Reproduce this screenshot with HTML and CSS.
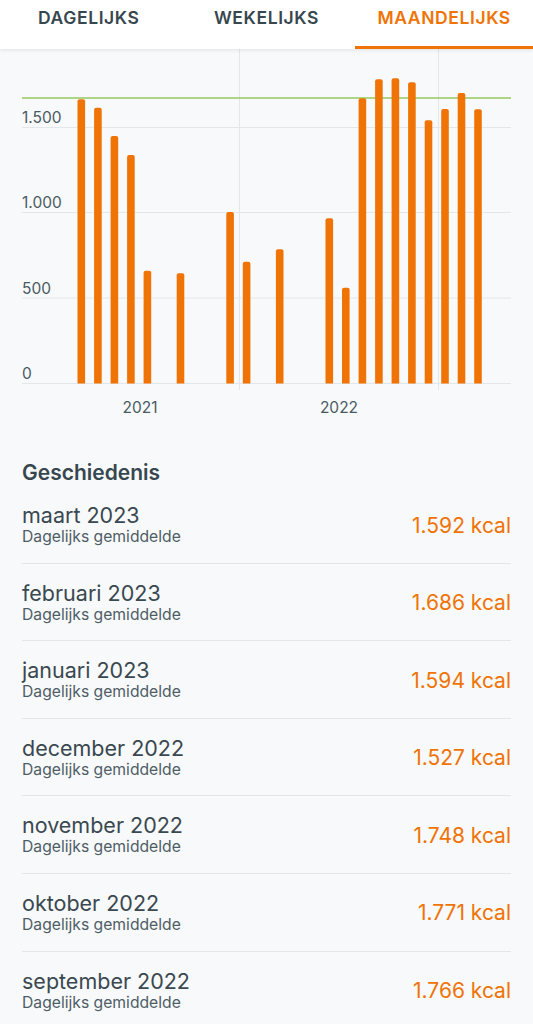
FILE: index.html
```html
<!DOCTYPE html>
<html lang="nl">
<head>
  <meta charset="UTF-8">
  <meta name="viewport" content="width=device-width, initial-scale=1.0">
  <title>Calorieën per maand</title>
  <link rel="stylesheet" href="styles.css">
</head>
<body>
  <nav class="tabs">
    <div class="tab">DAGELIJKS</div>
    <div class="tab">WEKELIJKS</div>
    <div class="tab active">MAANDELIJKS</div>
  </nav>

  <svg class="chart" width="533" height="381" viewBox="0 49 533 381">
    <!-- grid -->
    <g class="grid">
      <line x1="239.5" y1="49" x2="239.5" y2="390"/>
      <line x1="438.5" y1="49" x2="438.5" y2="390"/>
      <line x1="22" y1="127.5" x2="511" y2="127.5"/>
      <line x1="22" y1="212.5" x2="511" y2="212.5"/>
      <line x1="22" y1="298" x2="511" y2="298"/>
      <line x1="22" y1="383.5" x2="511" y2="383.5"/>
    </g>
    <line class="goal" x1="22" y1="98" x2="511" y2="98"/>
    <g class="axis">
      <text x="22" y="122.5">1.500</text>
      <text x="22" y="208">1.000</text>
      <text x="22" y="293.5">500</text>
      <text x="22" y="379">0</text>
      <text class="year" x="140" y="412.5">2021</text>
      <text class="year" x="339" y="412.5">2022</text>
    </g>
    <!-- one bar per month, rounded top -->
    <g class="bars">
      <path d="M77.5 383.5V101.3a2 2 0 0 1 2-2h3.6a2 2 0 0 1 2 2V383.5z"/>
      <path d="M94.1 383.5V109.7a2 2 0 0 1 2-2h3.6a2 2 0 0 1 2 2V383.5z"/>
      <path d="M110.6 383.5V138a2 2 0 0 1 2-2h3.6a2 2 0 0 1 2 2V383.5z"/>
      <path d="M127.1 383.5V157a2 2 0 0 1 2-2h3.6a2 2 0 0 1 2 2V383.5z"/>
      <path d="M143.6 383.5V272.7a2 2 0 0 1 2-2h3.6a2 2 0 0 1 2 2V383.5z"/>
      <path d="M176.7 383.5V275.3a2 2 0 0 1 2-2h3.6a2 2 0 0 1 2 2V383.5z"/>
      <path d="M226.3 383.5V214a2 2 0 0 1 2-2h3.6a2 2 0 0 1 2 2V383.5z"/>
      <path d="M242.8 383.5V263.7a2 2 0 0 1 2-2h3.6a2 2 0 0 1 2 2V383.5z"/>
      <path d="M275.9 383.5V251.3a2 2 0 0 1 2-2h3.6a2 2 0 0 1 2 2V383.5z"/>
      <path d="M325.5 383.5V220.3a2 2 0 0 1 2-2h3.6a2 2 0 0 1 2 2V383.5z"/>
      <path d="M342 383.5V289.7a2 2 0 0 1 2-2h3.6a2 2 0 0 1 2 2V383.5z"/>
      <path d="M358.6 383.5V100.3a2 2 0 0 1 2-2h3.6a2 2 0 0 1 2 2V383.5z"/>
      <path d="M375.1 383.5V81.3a2 2 0 0 1 2-2h3.6a2 2 0 0 1 2 2V383.5z"/>
      <path d="M391.6 383.5V80.3a2 2 0 0 1 2-2h3.6a2 2 0 0 1 2 2V383.5z"/>
      <path d="M408.1 383.5V84.3a2 2 0 0 1 2-2h3.6a2 2 0 0 1 2 2V383.5z"/>
      <path d="M424.7 383.5V122.3a2 2 0 0 1 2-2h3.6a2 2 0 0 1 2 2V383.5z"/>
      <path d="M441.2 383.5V111a2 2 0 0 1 2-2h3.6a2 2 0 0 1 2 2V383.5z"/>
      <path d="M457.7 383.5V95a2 2 0 0 1 2-2h3.6a2 2 0 0 1 2 2V383.5z"/>
      <path d="M474.2 383.5V111.3a2 2 0 0 1 2-2h3.6a2 2 0 0 1 2 2V383.5z"/>
    </g>
  </svg>

  <section class="history">
    <h2>Geschiedenis</h2>
    <div class="row">
      <div class="month">
        <div class="name">maart 2023</div>
        <div class="sub">Dagelijks gemiddelde</div>
      </div>
      <div class="value">1.592 kcal</div>
    </div>
    <div class="row">
      <div class="month">
        <div class="name">februari 2023</div>
        <div class="sub">Dagelijks gemiddelde</div>
      </div>
      <div class="value">1.686 kcal</div>
    </div>
    <div class="row">
      <div class="month">
        <div class="name">januari 2023</div>
        <div class="sub">Dagelijks gemiddelde</div>
      </div>
      <div class="value">1.594 kcal</div>
    </div>
    <div class="row">
      <div class="month">
        <div class="name">december 2022</div>
        <div class="sub">Dagelijks gemiddelde</div>
      </div>
      <div class="value">1.527 kcal</div>
    </div>
    <div class="row">
      <div class="month">
        <div class="name">november 2022</div>
        <div class="sub">Dagelijks gemiddelde</div>
      </div>
      <div class="value">1.748 kcal</div>
    </div>
    <div class="row">
      <div class="month">
        <div class="name">oktober 2022</div>
        <div class="sub">Dagelijks gemiddelde</div>
      </div>
      <div class="value">1.771 kcal</div>
    </div>
    <div class="row">
      <div class="month">
        <div class="name">september 2022</div>
        <div class="sub">Dagelijks gemiddelde</div>
      </div>
      <div class="value">1.766 kcal</div>
    </div>
  </section>
</body>
</html>
```

FILE: styles.css
```css
body {
  margin: 0;
  font-family: Inter, "Noto Sans", sans-serif;
  background: #f7f9fa;
  color: #37474f;
  overflow: hidden;
}

.tabs {
  display: grid;
  grid-template-columns: repeat(3, 1fr);
  height: 49px;
  background: #fff;
  box-shadow: 0 1px 4px rgba(0,0,0,0.1);
  position: relative;
}

.tab {
  box-sizing: border-box;
  height: 49px;
  line-height: 36px;
  text-align: center;
  font-size: 17.5px;
  font-weight: 600;
  letter-spacing: 0.6px;
  color: #37474f;
  border-bottom: 3px solid transparent;
}

.tab.active {
  color: #f07305;
  border-bottom-color: #f07305;
}

.chart {
  display: block;
}

.grid line {
  stroke: #e4e7e9;
  stroke-width: 1;
}

.goal {
  stroke: #94c85c;
  stroke-width: 1.5;
}

.axis text {
  font-size: 15.5px;
  fill: #4a5a63;
}

.axis .year {
  text-anchor: middle;
}

.bars path {
  fill: #f07305;
}

.history {
  padding: 30px 22px 0;
}

h2 {
  margin: 0;
  font-size: 21px;
  line-height: 26px;
  font-weight: 600;
  color: #37474f;
}

.row {
  display: flex;
  justify-content: space-between;
  align-items: center;
  padding: 17px 0 15.6px;
  border-bottom: 1px solid #e4e7e9;
}

.name {
  font-size: 21.5px;
  line-height: 24px;
  color: #3a4850;
}

.sub {
  font-size: 15.7px;
  line-height: 20px;
  color: #4f5d66;
}

.value {
  font-size: 21px;
  color: #f07305;
}
```
